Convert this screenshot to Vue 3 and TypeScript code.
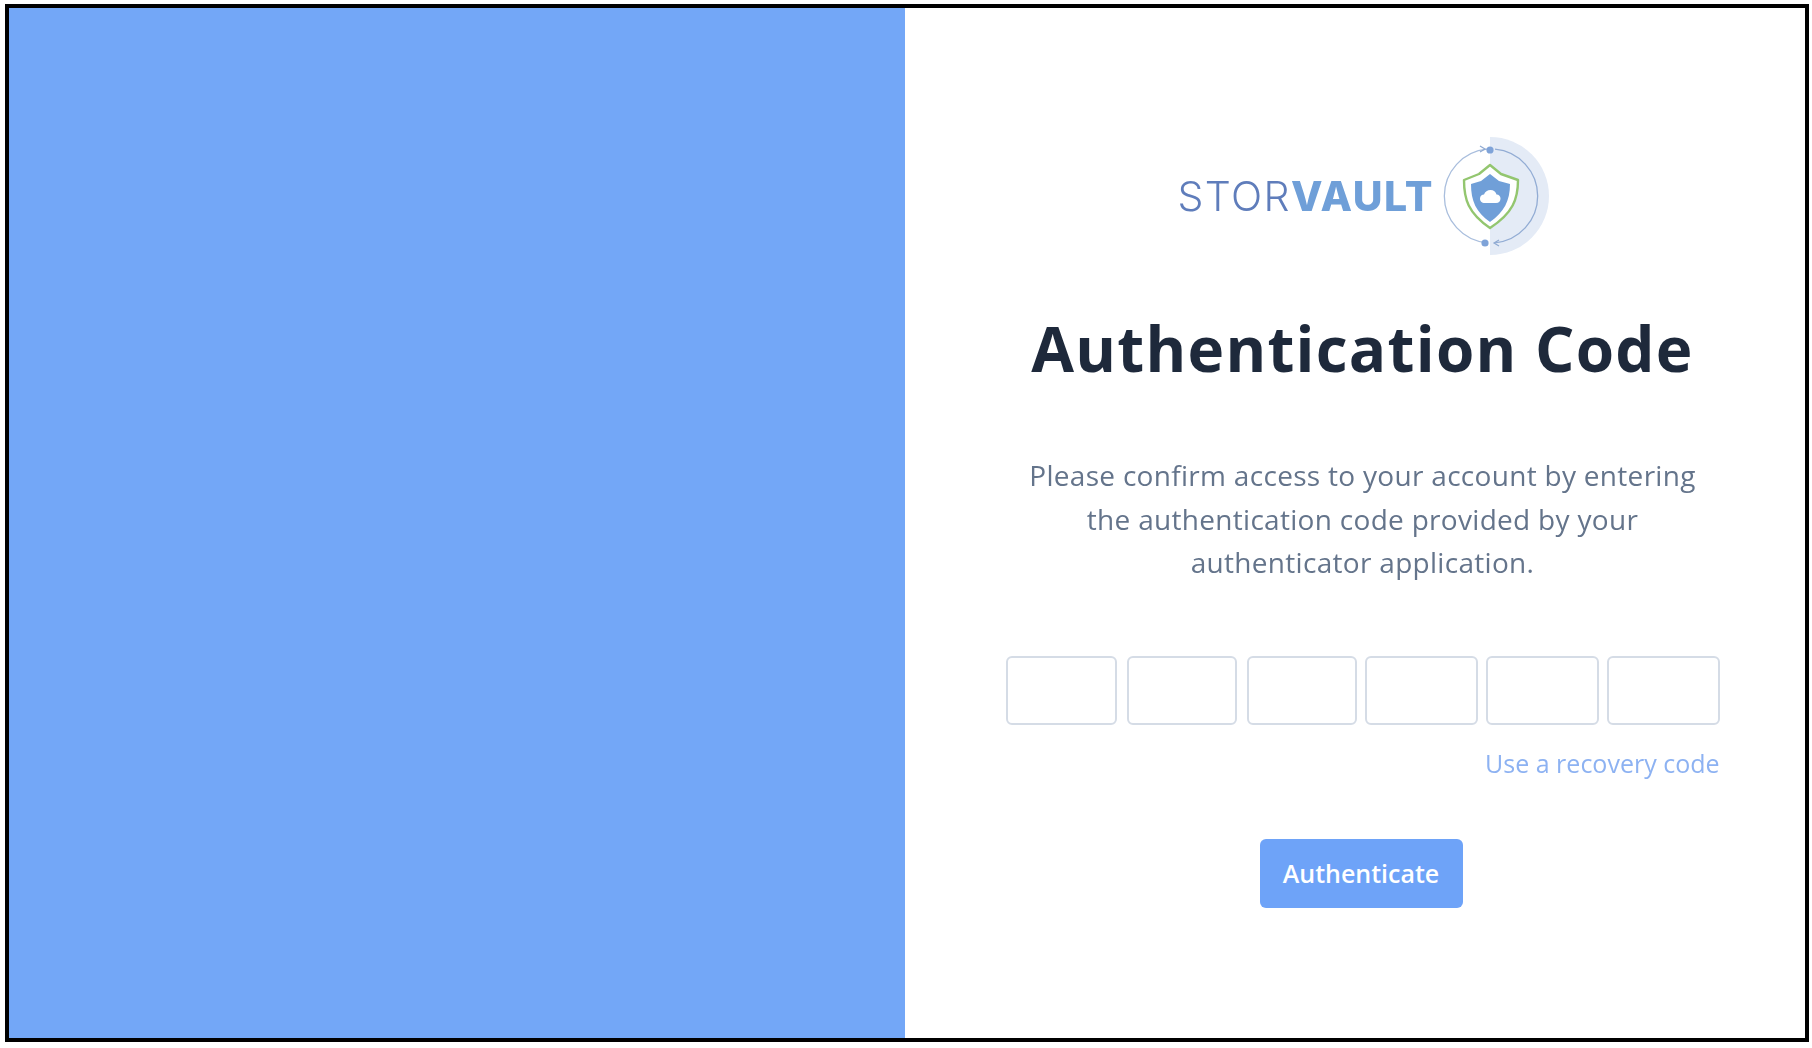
<script setup lang="ts">
const widths: number[] = [111, 110, 110, 113, 113, 113]
</script>

<template>
  <div class="page">
    <main class="frame">
      <section class="panel"></section>
      <section class="side">
        <div class="logo">
          <span class="word"><span class="stor">STOR</span><span class="vault">VAULT</span></span>
          <svg class="mark" width="112" height="120" viewBox="0 0 112 120" aria-hidden="true">
            <path d="M49 0A59 59 0 0 1 49 118Z" fill="#e4ebf6" />
            <path d="M46 12.200A47 47 0 0 0 46 105.800" fill="none" stroke="#a9bedd" stroke-width="1.300" />
            <path d="M54 12.200A47 47 0 0 1 54 105.800" fill="none" stroke="#92acd4" stroke-width="1.300" />
            <path d="M39 9l5 3-5 3" fill="none" stroke="#8fa9d2" stroke-width="1.200" />
            <path d="M58 103l-5 3 5 3" fill="none" stroke="#8fa9d2" stroke-width="1.200" />
            <circle cx="49" cy="13" r="3.600" fill="#7fa3d8" />
            <circle cx="44" cy="106" r="3.600" fill="#7fa3d8" />
            <path d="M49 28L60 37L77 43C77 62 72 76 49 91C27 76 23 62 23 43L38 37Z" fill="#fff" stroke="#93c66f" stroke-width="2.400" stroke-linejoin="round" />
            <path d="M49 37L58 44L69 47C69 64 63 75 49 85C35 75 30 64 30 47L40 44Z" fill="#709fd8" />
            <path d="M44 66C40.500 66 39 64 39 61.500C39 59 41 57.500 43 57.500C44 54.500 46.500 53 49.500 53C52.500 53 55 55 55.500 57.500C58 57.500 59.500 59.500 59.500 61.500C59.500 64 58 66 55 66Z" fill="#fff" />
          </svg>
        </div>
        <h1 class="title">Authentication Code</h1>
        <p class="copy">
          Please confirm access to your account by entering<br />
          the authentication code provided by your<br />
          authenticator application.
        </p>
        <div class="codes">
          <input
            v-for="(w, i) in widths"
            :key="i"
            class="code"
            :style="{ width: w + 'px' }"
            type="text"
            maxlength="1"
            aria-label="Code digit"
          />
        </div>
        <div class="link-row"><a class="link" href="#">Use a recovery code</a></div>
        <button class="submit" type="button">Authenticate</button>
      </section>
    </main>
  </div>
</template>

<style>
html, body { margin: 0; background: #fff; }
</style>

<style scoped>
.page {
  width: 1812px;
  height: 1048px;
  box-sizing: border-box;
  padding: 4px 3px 6px 5px;
  background: #fff;
  overflow: hidden;
}
.frame {
  display: flex;
  height: 100%;
  box-sizing: border-box;
  border: 4px solid #000;
  background: #fff;
}
.panel {
  width: 896px;
  flex: none;
  background: #73a7f7;
}
.side {
  flex: 1;
  display: flex;
  flex-direction: column;
  align-items: center;
  padding: 129px 0 0 15px;
  font-family: "Open Sans", sans-serif;
}
.logo {
  display: flex;
  align-items: center;
  height: 120px;
  width: 381.500px;
  filter: blur(0.6px);
}
.word {
  box-sizing: border-box;
  font-family: Inter, sans-serif;
  font-size: 41px;
  letter-spacing: 1.400px;
  line-height: 1;
  white-space: nowrap;
  width: 269.500px;
  padding-left: 5.750px;
  margin-top: -2px;
}
.stor { color: #5f7dbb; font-weight: 300; }
.vault { color: #6f9fd8; font-weight: 800; }
.mark { flex: none; }
.title {
  margin: 51px 0 0;
  height: 80px;
  font-size: 62px;
  letter-spacing: 1.250px;
  line-height: 80px;
  font-weight: 700;
  color: #1e293b;
  white-space: nowrap;
  filter: blur(0.4px);
}
.copy {
  margin: 66px 0 0;
  font-size: 28px;
  letter-spacing: 0.300px;
  line-height: 43.500px;
  color: #64748b;
  text-align: center;
  white-space: nowrap;
  filter: blur(0.4px);
}
.codes {
  display: flex;
  width: 714px;
  margin-top: 71px;
}
.code {
  flex: none;
  height: 69px;
  box-sizing: border-box;
  border: 2px solid #d5dce6;
  border-radius: 6px;
  background: #fff;
  padding: 0;
  outline: none;
  margin-right: 8px;
}
.code:nth-child(-n+2) { margin-right: 10px; }
.code:last-child { margin-right: 0; }
.link-row {
  width: 714px;
  margin-top: 21px;
  text-align: right;
  line-height: 34px;
  filter: blur(0.4px);
}
.link {
  font-size: 25px;
  color: #8db2f2;
  text-decoration: none;
}
.submit {
  width: 203px;
  height: 69px;
  margin-top: 55px;
  margin-right: 3px;
  border: 0;
  border-radius: 6px;
  background: #6ea3f8;
  color: #fff;
  font-family: "Open Sans", sans-serif;
  font-size: 25px;
  font-weight: 600;
  padding: 0;
}
</style>
